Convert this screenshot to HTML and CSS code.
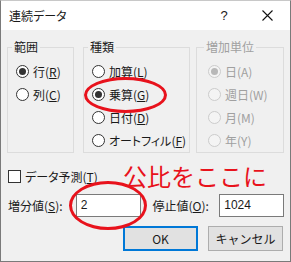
FILE: index.html
```html
<!DOCTYPE html>
<html lang="ja">
<head>
    <meta charset="UTF-8">
    <meta name="viewport" content="width=device-width, initial-scale=1.0">
    <title>連続データ</title>
    <link rel="stylesheet" href="styles.css">
</head>
<body>
    <div class="dialog">
        <div class="titlebar">
            <span class="title">連続データ</span>
            <span class="help">?</span>
            <span class="close">
                <svg width="11" height="11" viewBox="0 0 11 11">
                    <path d="M0.5 0.5 L10.5 10.5 M10.5 0.5 L0.5 10.5" stroke="#111" stroke-width="1.1" fill="none"/>
                </svg>
            </span>
        </div>

        <div class="content">
            <div class="groups">
                <fieldset class="group group-range">
                    <legend>範囲</legend>
                    <div class="option"><span class="radio checked"></span>行(<u>R</u>)</div>
                    <div class="option"><span class="radio"></span>列(<u>C</u>)</div>
                </fieldset>

                <fieldset class="group group-type">
                    <legend>種類</legend>
                    <div class="option"><span class="radio"></span>加算(<u>L</u>)</div>
                    <div class="option"><span class="radio checked"></span>乗算(<u>G</u>)</div>
                    <div class="option"><span class="radio"></span>日付(<u>D</u>)</div>
                    <div class="option"><span class="radio"></span>オートフィル(<u>F</u>)</div>
                </fieldset>

                <fieldset class="group group-unit disabled">
                    <legend>増加単位</legend>
                    <div class="option"><span class="radio checked"></span>日(A)</div>
                    <div class="option"><span class="radio"></span>週日(W)</div>
                    <div class="option"><span class="radio"></span>月(M)</div>
                    <div class="option"><span class="radio"></span>年(Y)</div>
                </fieldset>
            </div>

            <div class="check-row">
                <span class="checkbox"></span>
                <span>データ予測(<u>T</u>)</span>
                <span class="note">公比をここに</span>
            </div>

            <div class="value-row">
                <span class="value-label">増分値(<u>S</u>):</span>
                <span class="field">2</span>
                <span class="value-label stop-label">停止値(<u>O</u>):</span>
                <span class="field">1024</span>
            </div>

            <div class="buttons">
                <button class="btn btn-default">OK</button>
                <button class="btn">キャンセル</button>
            </div>
        </div>

        <!-- 赤丸の書き込み -->
        <span class="mark mark-type"></span>
        <span class="mark mark-step"></span>
    </div>
</body>
</html>
```

FILE: styles.css
```css
body {
    margin: 0;
    font-family: "Noto Sans CJK JP", "Noto Sans", sans-serif;
    font-size: 12px;
    color: #1a1a1a;
    font-feature-settings: "palt";
}
.dialog {
    position: relative;
    width: 291px;
    height: 262px;
    box-sizing: border-box;
    border: 1px solid #7a7a7a;
    border-top-color: #c8c8c8;
    background: #f0f0f0;
    overflow: hidden;
}
.titlebar {
    display: flex;
    align-items: center;
    height: 29px;
    background: #fff;
    padding-left: 8px;
}
.title {
    flex: 1;
    font-size: 12px;
}
.help {
    width: 12px;
    margin-right: 14px;
    text-align: center;
    font-family: "Liberation Sans", sans-serif;
    font-size: 13px;
}
.close {
    width: 46px;
    display: flex;
    justify-content: center;
}
.content {
    padding: 10px 6px 0 6px;
}
.groups {
    display: flex;
    align-items: stretch;
}
.group {
    margin: 0;
    padding: 6px 0 0 8px;
    border: 1px solid #dcdcdc;
    min-width: 0;
}
.group legend {
    padding: 0 2px;
    margin-left: -4px;
    line-height: 14px;
}
.group-range {
    width: 67px;
    box-sizing: border-box;
}
.group-type {
    width: 107px;
    box-sizing: border-box;
    margin-left: 9px;
}
.group-unit {
    width: 88px;
    box-sizing: border-box;
    margin-left: 6px;
    padding-left: 11px;
}
.option {
    display: flex;
    align-items: center;
    height: 23px;
    white-space: nowrap;
}
.radio {
    width: 13px;
    height: 13px;
    box-sizing: border-box;
    border: 1px solid #333;
    border-radius: 50%;
    background: #fff;
    margin-right: 4px;
    display: flex;
    align-items: center;
    justify-content: center;
    flex-shrink: 0;
}
.radio.checked::after {
    content: "";
    width: 7px;
    height: 7px;
    border-radius: 50%;
    background: #333;
}
.disabled,
.disabled legend {
    color: #a0a0a0;
}
.disabled .radio {
    border-color: #cccccc;
    background: #f4f4f4;
}
.disabled .radio.checked::after {
    background: #b8b8b8;
}
.check-row {
    display: flex;
    align-items: center;
    height: 24px;
    margin-top: 11px;
    padding-left: 1px;
}
.checkbox {
    width: 13px;
    height: 13px;
    box-sizing: border-box;
    border: 1px solid #333;
    background: #fff;
    margin-right: 4px;
}
.note {
    margin-left: auto;
    margin-right: 17px;
    color: #e8121c;
    font-size: 24px;
    line-height: 24px;
    font-feature-settings: normal;
}
.value-row {
    display: flex;
    align-items: center;
    height: 23px;
    margin-top: 6px;
    padding-left: 1px;
}
.value-label {
    width: 68px;
    white-space: nowrap;
}
.stop-label {
    width: 67px;
    margin-left: 12px;
}
.field {
    width: 65px;
    height: 23px;
    box-sizing: border-box;
    border: 1px solid #7a7a7a;
    background: #fff;
    padding-left: 4px;
    line-height: 21px;
    font-family: "Liberation Sans", sans-serif;
    font-size: 12px;
}
.buttons {
    display: flex;
    justify-content: flex-end;
    gap: 10px;
    margin-top: 9px;
    padding-right: 1px;
}
.btn {
    width: 75px;
    height: 25px;
    margin: 0;
    border: 1px solid #adadad;
    background: #e1e1e1;
    font-family: inherit;
    font-size: 12px;
    color: #1a1a1a;
    padding: 0;
}
.btn-default {
    border: 2px solid #0078d7;
}
.mark {
    position: absolute;
    box-sizing: border-box;
    border: 3px solid #e8121c;
    border-radius: 50%;
}
.mark-type {
    left: 83px;
    top: 76px;
    width: 83px;
    height: 36px;
}
.mark-step {
    left: 68px;
    top: 180px;
    width: 78px;
    height: 49px;
}
```
